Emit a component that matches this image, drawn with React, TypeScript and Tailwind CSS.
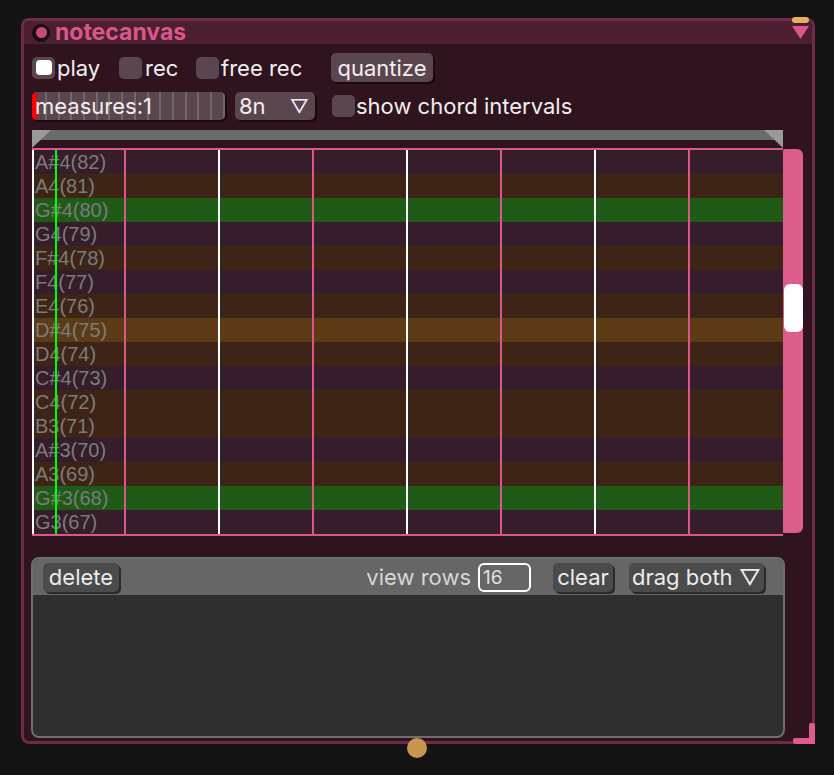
import React from "react";

// filas del piano roll (de arriba a abajo)
const rows = [
  { label: "A#4(82)", bg: "bg-[#351d2b]" },
  { label: "A4(81)", bg: "bg-[#3e2416]" },
  { label: "G#4(80)", bg: "bg-[#205a17]" },
  { label: "G4(79)", bg: "bg-[#351d2b]" },
  { label: "F#4(78)", bg: "bg-[#3e2416]" },
  { label: "F4(77)", bg: "bg-[#351d2b]" },
  { label: "E4(76)", bg: "bg-[#3e2416]" },
  { label: "D#4(75)", bg: "bg-[#5c3b16]" },
  { label: "D4(74)", bg: "bg-[#3e2416]" },
  { label: "C#4(73)", bg: "bg-[#351d2b]" },
  { label: "C4(72)", bg: "bg-[#3e2416]" },
  { label: "B3(71)", bg: "bg-[#3e2416]" },
  { label: "A#3(70)", bg: "bg-[#351d2b]" },
  { label: "A3(69)", bg: "bg-[#3e2416]" },
  { label: "G#3(68)", bg: "bg-[#205a17]" },
  { label: "G3(67)", bg: "bg-[#351d2b]" },
];

const lineColors = [
  "border-[#d9578a]",
  "border-white",
  "border-[#d9578a]",
  "border-white",
  "border-[#d9578a]",
  "border-white",
  "border-[#d9578a]",
];

const Checkbox = ({ checked }: { checked?: boolean }) => (
  <div className="w-[23px] h-[22px] rounded-[5px] bg-[#5b4650] flex items-center justify-center shrink-0">
    {checked && <div className="w-[16px] h-[15px] rounded-[4px] bg-white" />}
  </div>
);

const App = () => {
  return (
    <div
      className="w-full h-[775px] bg-[#141414] pt-[18px] pl-[21px] text-[#f2eef0]"
      style={{ fontFamily: "Inter, 'Noto Sans', sans-serif" }}
    >
      <div className="relative w-[794px] h-[726px] rounded-[8px] border-[3px] border-[#6e2a47] bg-[#2f141f]">
        {/* Barra de título */}
        <div className="h-[23px] bg-[#4b1e32] flex items-center pl-[8px] rounded-t-[5px]">
          <div className="w-[18px] h-[18px] rounded-full bg-[#1c0b12] flex items-center justify-center">
            <div className="w-[11px] h-[11px] rounded-full bg-[#c44c7c]" />
          </div>
          <span className="ml-[5px] text-[23px] font-bold leading-none text-[#d9578a] -mt-[1px]">
            notecanvas
          </span>
        </div>

        {/* marcadores de esquina */}
        <div className="absolute left-[768px] -top-[4px] w-[17px] h-[6px] rounded-full bg-[#e3b35a]" />
        <svg className="absolute left-[768px] top-[5px]" width="17" height="13" viewBox="0 0 17 13">
          <polygon points="0,0 17,0 8.5,13" fill="#d9578a" />
        </svg>

        <div className="pl-[8px] pt-[9px]">
          {/* Fila 1 */}
          <div className="h-[29px] flex items-center text-[22px] leading-none">
            <div className="w-[87px] flex items-center gap-[2px]">
              <Checkbox checked />
              <span>play</span>
            </div>
            <div className="w-[77px] flex items-center gap-[3px]">
              <Checkbox />
              <span>rec</span>
            </div>
            <div className="w-[135px] flex items-center gap-[2px]">
              <Checkbox />
              <span>free rec</span>
            </div>
            <button className="w-[102px] h-[29px] rounded-[5px] bg-[#5b4650] shadow-[2px_2px_0_#1a0a10] leading-none">
              quantize
            </button>
          </div>

          {/* Fila 2 */}
          <div className="mt-[10px] h-[28px] flex items-center text-[22px] leading-none">
            <div className="relative w-[193px] h-[28px] rounded-[5px] bg-[#5b4650] shadow-[2px_2px_0_#1a0a10] flex items-center overflow-hidden">
              <div className="absolute left-[13px] top-0 bottom-0 flex gap-[10.7px]">
                {Array.from({ length: 15 }).map((_, i) => (
                  <div key={i} className="w-[2px] h-full bg-[#6f6a6a]" />
                ))}
              </div>
              <div className="absolute left-0 top-0 w-[5px] h-full rounded-[3px] bg-[#ff0000]" />
              <span className="relative ml-[3px]">measures:1</span>
            </div>
            <div className="ml-[10px] w-[80px] h-[28px] rounded-[5px] bg-[#5b4650] shadow-[2px_2px_0_#1a0a10] flex items-center justify-between px-[4px]">
              <span>8n</span>
              <span className="text-[19px] mr-[2px]">▽</span>
            </div>
            <div className="ml-[17px] flex items-center gap-[1px]">
              <Checkbox />
              <span>show chord intervals</span>
            </div>
          </div>

          {/* Barra de tiempo */}
          <svg className="mt-[10px] block" width="751" height="18" viewBox="0 0 751 18">
            <rect x="0" y="0" width="751" height="10" fill="#6b6b6b" />
            <polygon points="0,0 19,0 0,18" fill="#9a9a9a" />
            <polygon points="732,0 751,0 751,18" fill="#9a9a9a" />
          </svg>

          {/* Rejilla de notas */}
          <div className="flex items-start">
            <div className="relative w-[751px] border-y-2 border-[#d9578a]">
              {rows.map((r) => (
                <div
                  key={r.label}
                  className={`h-[24px] ${r.bg} flex items-center pl-[3px] text-[20px] leading-none text-[#7b7b7b]`}
                  style={{ fontFamily: "'Liberation Sans', Arial, sans-serif" }}
                >
                  {r.label}
                </div>
              ))}
              <div className="absolute inset-0 flex">
                {Array.from({ length: 8 }).map((_, i) => (
                  <div
                    key={i}
                    className={`w-[94px] h-full shrink-0 ${i < 7 ? "border-r-2 " + lineColors[i] : ""}`}
                  />
                ))}
              </div>
              <div className="absolute left-0 top-0 bottom-0 w-[1.5px] bg-white" />
              <div className="absolute left-[23px] top-0 bottom-0 w-[2px] bg-[#00ff00]" />
            </div>
            <div className="relative mt-[1px] w-[20px] h-[384px] rounded-r-[6px] rounded-tl-[2px] bg-[#dc5d8c]">
              <div className="absolute left-[1px] top-[135px] w-[19px] h-[48px] rounded-[6px] bg-white" />
            </div>
          </div>

          {/* Panel inferior */}
          <div className="mt-[21px] -ml-[1px] w-[754px] h-[181px] rounded-[8px] border-2 border-[#6e6e6e] bg-[#2f2f2f] overflow-hidden">
            <div className="h-[36px] bg-[#666666] flex items-center pl-[10px] pr-[19px] text-[22px] leading-none">
              <button className="w-[76px] h-[29px] px-0 rounded-[5px] bg-[#4b4b4b] shadow-[2px_2px_0_#2a2a2a] text-[#ececec]">
                delete
              </button>
              <div className="flex-1" />
              <span className="text-[#d6d6d6]">view rows</span>
              <div className="ml-[7px] w-[53px] h-[29px] rounded-[6px] border-2 border-white flex items-center pl-[3px] text-[19px] text-[#e0e0e0]">
                16
              </div>
              <button className="ml-[22px] w-[60px] h-[29px] px-0 rounded-[5px] bg-[#4b4b4b] shadow-[2px_2px_0_#2a2a2a] text-[#ececec]">
                clear
              </button>
              <button className="ml-[16px] w-[135px] h-[29px] px-0 rounded-[5px] bg-[#4b4b4b] shadow-[2px_2px_0_#2a2a2a] text-[#ececec] whitespace-nowrap">
                drag both ▽
              </button>
            </div>
          </div>
        </div>

        {/* esquina de redimensión */}
        <div className="absolute -right-[3px] -bottom-[3px] w-[22px] h-[21px]">
          <div className="absolute right-0 top-0 w-[6px] h-full rounded-t-[2px] bg-[#e05a8e]" />
          <div className="absolute right-0 bottom-0 w-full h-[6px] rounded-l-[2px] bg-[#e05a8e]" />
        </div>

        {/* punto de salida */}
        <div className="absolute left-[383px] top-[717px] w-[20px] h-[20px] rounded-full bg-[#c8964f]" />
      </div>
    </div>
  );
};

export default App;
